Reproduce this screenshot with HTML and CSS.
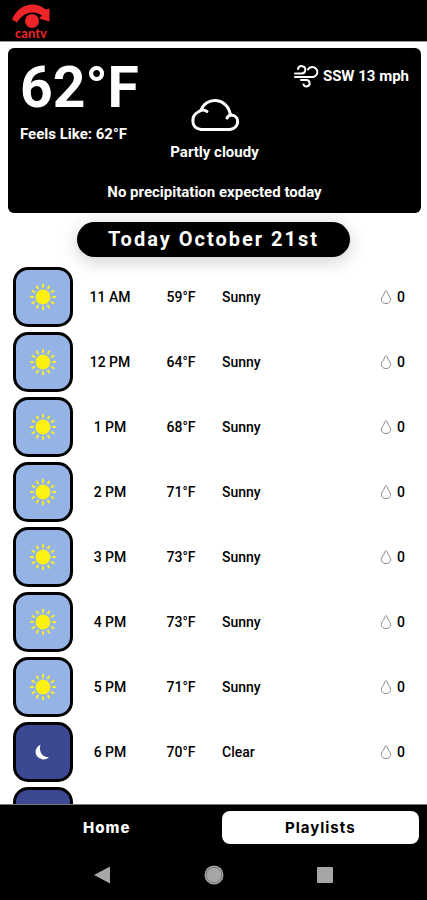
FILE: index.html
```html
<!DOCTYPE html>
<html lang="en">
<head>
    <meta charset="UTF-8">
    <meta name="viewport" content="width=device-width, initial-scale=1.0">
    <title>CAN TV Weather</title>
    <link rel="stylesheet" href="styles.css">
</head>
<body>
    <!-- Shared icons -->
    <svg class="icon-defs" aria-hidden="true">
        <symbol id="sun" viewBox="0 0 28 28">
            <circle cx="14" cy="14" r="7.4" fill="#fdf013"/>
            <g stroke="#f6ee2c" stroke-width="2" stroke-linecap="round">
                <path id="ray" d="M14 4V1.8"/>
                <use href="#ray" transform="rotate(30 14 14)"/>
                <use href="#ray" transform="rotate(60 14 14)"/>
                <use href="#ray" transform="rotate(90 14 14)"/>
                <use href="#ray" transform="rotate(120 14 14)"/>
                <use href="#ray" transform="rotate(150 14 14)"/>
                <use href="#ray" transform="rotate(180 14 14)"/>
                <use href="#ray" transform="rotate(210 14 14)"/>
                <use href="#ray" transform="rotate(240 14 14)"/>
                <use href="#ray" transform="rotate(270 14 14)"/>
                <use href="#ray" transform="rotate(300 14 14)"/>
                <use href="#ray" transform="rotate(330 14 14)"/>
            </g>
        </symbol>
        <symbol id="moon" viewBox="0 0 28 28">
            <path d="M11.6 6.5A7.8 7.8 0 1 0 20 19.2C13 19.6 9.4 12.8 11.6 6.5Z" fill="#fff"/>
        </symbol>
        <symbol id="drop" viewBox="0 0 12 16">
            <path d="M6 1.5C4.5 2.500 4.500 5 2.500 7.500C-.5 12 3 14.500 6 14.500S12.500 12 9.500 7.500C7.500 5 7.500 2.500 6 1.500Z" fill="none" stroke="#888"/>
        </symbol>
    </svg>

    <!-- Header -->
    <header>
        <a href="#" class="logo">
            <svg width="40" height="24" viewBox="0 0 40 24" aria-hidden="true">
                <path d="M1 15.500C8-1 25-3 34.500 5.500L38.500 4.500V17.500L28 14.500L31 11.500C24 6.500 13 7 6 18.500Z" fill="#ee2428"/>
                <circle cx="21" cy="17" r="7" fill="#ee2428"/>
            </svg>
            <span>cantv</span>
        </a>
    </header>

    <main>
        <!-- Current conditions -->
        <section class="current">
            <div class="current-top">
                <div>
                    <h1>62°F</h1>
                    <p>Feels Like: 62°F</p>
                </div>
                <p class="wind">
                    <svg width="26" height="24" viewBox="0 0 26 24" fill="none" stroke="#fff" stroke-width="2" stroke-linecap="round" aria-hidden="true">
                        <path d="M2 9.500H8.500A3.700 3.700 0 1 0 5 5"/>
                        <path d="M2 13H19.500A5 5 0 1 0 15 5.500"/>
                        <path d="M8 16H13.500A3.200 3.200 0 1 1 10.500 20.500"/>
                    </svg>
                    SSW 13 mph
                </p>
            </div>
            <div class="sky">
                <svg width="50" height="34" viewBox="0 0 50 34" fill="none" stroke="#fff" stroke-width="3" stroke-linecap="round" stroke-linejoin="round" aria-hidden="true">
                    <path d="M17 13.500C14 11.500 11 12 9 13.500C1 17 0 30 11 31.500H40C50 30 50 18 41.500 17Q38.500 17 37 20"/>
                    <path d="M11 12.500C15-1 37-2 40.500 17"/>
                </svg>
                <p>Partly cloudy</p>
            </div>
            <p class="rain-note">No precipitation expected today</p>
        </section>

        <h2>Today October 21st</h2>

        <!-- Hourly forecast -->
        <table>
            <tbody>
                <tr>
                    <td class="tile"><svg><use href="#sun"/></svg></td>
                    <td class="time">11 AM</td>
                    <td class="temp">59°F</td>
                    <td class="cond">Sunny</td>
                    <td class="rain"><svg><use href="#drop"/></svg>0</td>
                </tr>
                <tr>
                    <td class="tile"><svg><use href="#sun"/></svg></td>
                    <td class="time">12 PM</td>
                    <td class="temp">64°F</td>
                    <td class="cond">Sunny</td>
                    <td class="rain"><svg><use href="#drop"/></svg>0</td>
                </tr>
                <tr>
                    <td class="tile"><svg><use href="#sun"/></svg></td>
                    <td class="time">1 PM</td>
                    <td class="temp">68°F</td>
                    <td class="cond">Sunny</td>
                    <td class="rain"><svg><use href="#drop"/></svg>0</td>
                </tr>
                <tr>
                    <td class="tile"><svg><use href="#sun"/></svg></td>
                    <td class="time">2 PM</td>
                    <td class="temp">71°F</td>
                    <td class="cond">Sunny</td>
                    <td class="rain"><svg><use href="#drop"/></svg>0</td>
                </tr>
                <tr>
                    <td class="tile"><svg><use href="#sun"/></svg></td>
                    <td class="time">3 PM</td>
                    <td class="temp">73°F</td>
                    <td class="cond">Sunny</td>
                    <td class="rain"><svg><use href="#drop"/></svg>0</td>
                </tr>
                <tr>
                    <td class="tile"><svg><use href="#sun"/></svg></td>
                    <td class="time">4 PM</td>
                    <td class="temp">73°F</td>
                    <td class="cond">Sunny</td>
                    <td class="rain"><svg><use href="#drop"/></svg>0</td>
                </tr>
                <tr>
                    <td class="tile"><svg><use href="#sun"/></svg></td>
                    <td class="time">5 PM</td>
                    <td class="temp">71°F</td>
                    <td class="cond">Sunny</td>
                    <td class="rain"><svg><use href="#drop"/></svg>0</td>
                </tr>
                <tr>
                    <td class="tile night"><svg><use href="#moon"/></svg></td>
                    <td class="time">6 PM</td>
                    <td class="temp">70°F</td>
                    <td class="cond">Clear</td>
                    <td class="rain"><svg><use href="#drop"/></svg>0</td>
                </tr>
                <tr>
                    <td class="tile night"></td>
                </tr>
            </tbody>
        </table>
    </main>

    <!-- Tabs and system buttons -->
    <footer>
        <nav class="tabs">
            <a href="#">Home</a>
            <a href="#" class="active">Playlists</a>
        </nav>
        <div class="system">
            <button type="button" aria-label="Back">
                <svg width="20" height="20" viewBox="0 0 20 20"><path d="M1 10L17 1.500V18.500Z" fill="#a6a6a6"/></svg>
            </button>
            <button type="button" aria-label="Home screen">
                <svg width="20" height="20" viewBox="0 0 20 20"><circle cx="10" cy="10" r="9.500" fill="#a6a6a6"/><circle cx="10" cy="10" r="7.800" fill="none" stroke="#777"/></svg>
            </button>
            <button type="button" aria-label="Recent apps">
                <svg width="20" height="20" viewBox="0 0 20 20"><rect x="2" y="2" width="16" height="16" rx="1" fill="#a6a6a6"/></svg>
            </button>
        </div>
    </footer>
</body>
</html>
```
FILE: styles.css
```css
* {
    box-sizing: border-box;
}

body {
    margin: 0;
    height: 100vh;
    display: flex;
    flex-direction: column;
    background: #fff;
    color: #000;
    font-family: Roboto, sans-serif;
    font-size: 14px;
    line-height: 20px;
}

h1, h2, p {
    margin: 0;
}

.icon-defs {
    display: none;
}

/* Header */
header {
    flex: none;
    background: #000;
    height: 42px;
    padding: 4px 11px;
    border-bottom: 1px solid #999;
}

.logo {
    display: inline-flex;
    flex-direction: column;
    align-items: center;
    color: #ee2428;
    font-family: Lato, sans-serif;
    font-size: 13px;
    font-weight: bold;
    line-height: 10px;
    text-decoration: none;
}

main {
    flex: 1;
    min-height: 0;
    overflow: hidden;
}

.current {
    margin: 6px 6px 0 8px;
    padding: 12px 12px 11px;
    border-radius: 6px;
    background: #000;
    color: #fff;
    font-size: 15px;
    font-weight: bold;
}

.current-top {
    display: flex;
    justify-content: space-between;
    align-items: flex-start;
}

h1 {
    font-size: 57px;
    line-height: 56px;
    margin-bottom: 8px;
}

.wind {
    display: flex;
    align-items: center;
    gap: 4px;
    padding-top: 4px;
}

.sky {
    display: flex;
    flex-direction: column;
    align-items: center;
    gap: 10px;
    margin-top: -46px; /* sits between the temperature and the wind */
}

.rain-note {
    margin-top: 20px;
    text-align: center;
}

h2 {
    width: fit-content;
    margin: 9px auto 7px;
    padding: 0 31px;
    border-radius: 18px;
    background: #000;
    color: #fff;
    box-shadow: 0 4px 18px rgba(0, 0, 0, 0.2);
    font-size: 20px;
    line-height: 35px;
    letter-spacing: 2px;
}

/* Hourly rows */
table {
    display: block;
    padding: 0 22px 0 13px;
    font-weight: 500;
}

tbody {
    display: block;
}

tr {
    display: grid;
    grid-template-columns: 60px 74px 68px 1fr auto;
    align-items: center;
    height: 65px;
}

td {
    padding: 0;
}

.tile {
    display: grid;
    place-items: center;
    height: 60px;
    border: 3px solid #000;
    border-radius: 15px;
    background: #96b3e5;
}

.tile svg {
    width: 28px;
    height: 28px;
}

.night {
    background: #3c4892;
}

.time, .temp {
    text-align: center;
}

.cond {
    padding-left: 7px;
}

.rain {
    display: flex;
    align-items: center;
    gap: 5px;
}

.rain svg {
    width: 12px;
    height: 16px;
}

/* Footer */
footer {
    flex: none;
    background: #000;
    border-top: 1px solid #777;
}

.tabs {
    display: grid;
    grid-template-columns: 1fr 1fr;
    gap: 16px;
    padding: 6px 8px 0;
}

.tabs a {
    border-radius: 8px;
    color: #fff;
    font-family: Inter, sans-serif;
    font-size: 15px;
    font-weight: 800;
    line-height: 33px;
    letter-spacing: 1px;
    text-align: center;
    text-decoration: none;
}

.tabs .active {
    background: #fff;
    color: #000;
    font-weight: 700;
}

.system {
    display: flex;
    justify-content: center;
    gap: 91px;
    padding: 21px 0 15px;
}

.system button {
    display: flex;
    padding: 0;
    border: none;
    background: none;
}
```
